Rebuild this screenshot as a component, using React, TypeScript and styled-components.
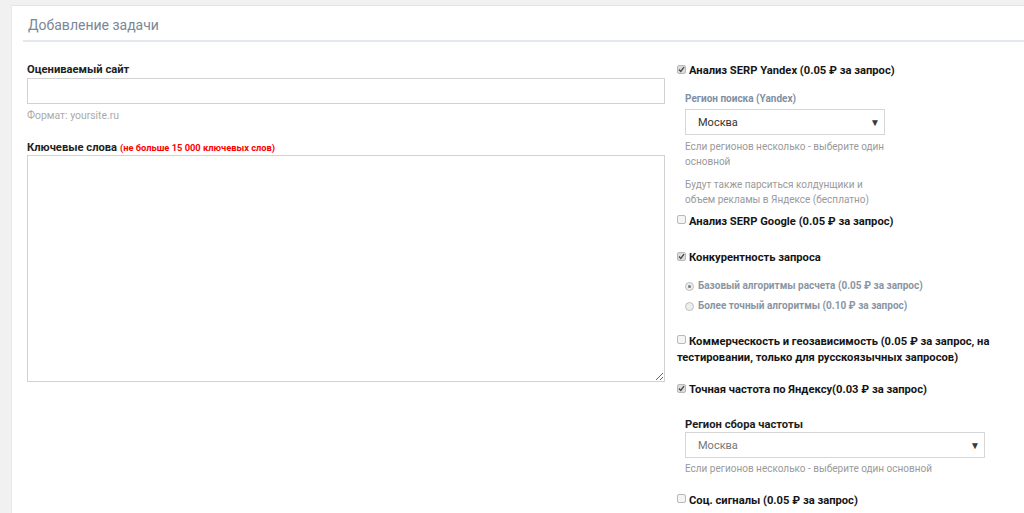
import React from "react";
import styled, { createGlobalStyle } from "styled-components";

const Global = createGlobalStyle`
  html, body { margin: 0; padding: 0; background: #f1f1f1; }
  body { font-family: Roboto, "Liberation Sans", Arial, sans-serif; }
  * { box-sizing: border-box; }
`;

const Page = styled.div`
  padding: 5px 0 0 11px;
  height: 513px;
  overflow: hidden;
`;

const Card = styled.div`
  background: #fff;
  border-top: 1px solid #e4e4e4;
  border-left: 1px solid #e8e8e8;
  height: 600px;
`;

const Header = styled.div`
  margin-left: 11px;
  padding: 10px 0 6px 5px;
  border-bottom: 2px solid #e3e8ee;
`;

const Title = styled.h2`
  margin: 0;
  font-size: 14px;
  line-height: 18px;
  font-weight: 400;
  color: #7b8796;
`;

const Body = styled.div`
  display: grid;
  grid-template-columns: 638px 340px;
  column-gap: 12px;
  padding-left: 15px;
`;

const LeftCol = styled.div`
  display: flex;
  flex-direction: column;
  padding-top: 21px;
`;

const RightCol = styled.div`
  display: flex;
  flex-direction: column;
  padding-top: 21px;
`;

const FieldLabel = styled.label<{ $mt?: number }>`
  font-size: 11.2px;
  line-height: 14px;
  font-weight: 700;
  color: #222;
  margin-top: ${(p) => p.$mt ?? 0}px;
`;

const Red = styled.span`
  color: #ff0000;
  font-size: 9.3px;
  font-weight: 700;
`;

const TextInput = styled.input`
  margin-top: 1px;
  height: 26px;
  width: 100%;
  border: 1px solid #d2d2d2;
  outline: none;
  font: inherit;
`;

const Hint = styled.div`
  margin-top: 5px;
  font-size: 10.4px;
  line-height: 14px;
  color: #aaaaaa;
`;

const TextArea = styled.textarea`
  margin-top: 0px;
  height: 227px;
  width: 100%;
  border: 1px solid #d2d2d2;
  outline: none;
  font: inherit;
  resize: both;
`;

const CheckRow = styled.div<{ $mt?: number }>`
  margin-top: ${(p) => p.$mt ?? 0}px;
  font-size: 11.2px;
  line-height: 16px;
  font-weight: 700;
  color: #151515;
`;

const Box = styled.span<{ $checked?: boolean }>`
  display: inline-flex;
  align-items: center;
  justify-content: center;
  width: 9px;
  height: 9px;
  margin-right: 3px;
  border: 1px solid #b9b9b9;
  border-radius: 2px;
  background: ${(p) => (p.$checked ? "#dcdcdc" : "#f4f4f4")};
  position: relative;
  top: -1px;
`;

const Indent = styled.div`
  padding-left: 8px;
  display: flex;
  flex-direction: column;
`;

const SubLabel = styled.div<{ $dark?: boolean; $mt?: number }>`
  margin-top: ${(p) => p.$mt ?? 0}px;
  font-size: ${(p) => (p.$dark ? 11.2 : 10)}px;
  line-height: 14px;
  font-weight: 700;
  color: ${(p) => (p.$dark ? "#1c1c1c" : "#7f8fa4")};
`;

const Select = styled.div<{ $w: number; $mt: number; $muted?: boolean }>`
  margin-top: ${(p) => p.$mt}px;
  width: ${(p) => p.$w}px;
  height: 26px;
  border: 1px solid #d6d6d6;
  display: flex;
  align-items: center;
  justify-content: space-between;
  padding: 0 4px 0 12px;
  font-size: 11px;
  color: ${(p) => (p.$muted ? "#777" : "#333")};
`;

const Arrow = styled.span`
  font-size: 10px;
  color: #3a3a3a;
`;

const Help = styled.div<{ $mt: number }>`
  margin-top: ${(p) => p.$mt}px;
  font-size: 10px;
  line-height: 15px;
  color: #9a9a9a;
`;

const RadioGroup = styled.div`
  margin-top: 12px;
  padding-left: 8px;
  display: flex;
  flex-direction: column;
  gap: 4px;
`;

const RadioRow = styled.div`
  display: flex;
  align-items: center;
  font-size: 10px;
  line-height: 16px;
  font-weight: 700;
  color: #8a95a3;
`;

const Radio = styled.span<{ $on?: boolean }>`
  width: 9px;
  height: 9px;
  border-radius: 50%;
  border: 1px solid #bdbdbd;
  background: #eee;
  margin-right: 4px;
  display: inline-flex;
  align-items: center;
  justify-content: center;
  &::after {
    content: "";
    width: 3px;
    height: 3px;
    border-radius: 50%;
    background: ${(p) => (p.$on ? "#777" : "transparent")};
  }
`;

const Check = ({ checked }: { checked?: boolean }) => (
  <Box $checked={checked}>
    {checked && (
      <svg width="7" height="7" viewBox="0 0 7 7">
        <path d="M1 3.6 L2.8 5.4 L6 1.2" stroke="#4a4a4a" strokeWidth="1.4" fill="none" />
      </svg>
    )}
  </Box>
);

export default function App() {
  return (
    <>
      <Global />
      <Page>
        <Card>
          <Header>
            <Title>Добавление задачи</Title>
          </Header>
          <Body>
            <LeftCol>
              <FieldLabel>Оцениваемый сайт</FieldLabel>
              <TextInput />
              <Hint>Формат: yoursite.ru</Hint>
              <FieldLabel $mt={18}>
                Ключевые слова <Red>(не больше 15 000 ключевых слов)</Red>
              </FieldLabel>
              <TextArea />
            </LeftCol>
            <RightCol>
              <CheckRow>
                <Check checked />
                Анализ SERP Yandex (0.05 ₽ за запрос)
              </CheckRow>
              <Indent>
                <SubLabel $mt={13}>Регион поиска (Yandex)</SubLabel>
                <Select $w={200} $mt={3}>
                  Москва <Arrow>▼</Arrow>
                </Select>
                <Help $mt={4}>
                  Если регионов несколько - выберите один
                  <br />
                  основной
                </Help>
                <Help $mt={8}>
                  Будут также парситься колдунщики и
                  <br />
                  объем рекламы в Яндексе (бесплатно)
                </Help>
              </Indent>
              <CheckRow $mt={7}>
                <Check />
                Анализ SERP Google (0.05 ₽ за запрос)
              </CheckRow>
              <CheckRow $mt={20}>
                <Check checked />
                Конкурентность запроса
              </CheckRow>
              <RadioGroup>
                <RadioRow>
                  <Radio $on />
                  Базовый алгоритмы расчета (0.05 ₽ за запрос)
                </RadioRow>
                <RadioRow>
                  <Radio />
                  Более точный алгоритмы (0.10 ₽ за запрос)
                </RadioRow>
              </RadioGroup>
              <CheckRow $mt={20}>
                <Check />
                Коммерческость и геозависимость (0.05 ₽ за запрос, на
                <br />
                тестировании, только для русскоязычных запросов)
              </CheckRow>
              <CheckRow $mt={16}>
                <Check checked />
                Точная частота по Яндексу(0.03 ₽ за запрос)
              </CheckRow>
              <Indent>
                <SubLabel $dark $mt={20}>Регион сбора частоты</SubLabel>
                <Select $w={300} $mt={0} $muted>
                  Москва <Arrow>▼</Arrow>
                </Select>
                <Help $mt={3}>Если регионов несколько - выберите один основной</Help>
              </Indent>
              <CheckRow $mt={17}>
                <Check />
                Соц. сигналы (0.05 ₽ за запрос)
              </CheckRow>
            </RightCol>
          </Body>
        </Card>
      </Page>
    </>
  );
}
